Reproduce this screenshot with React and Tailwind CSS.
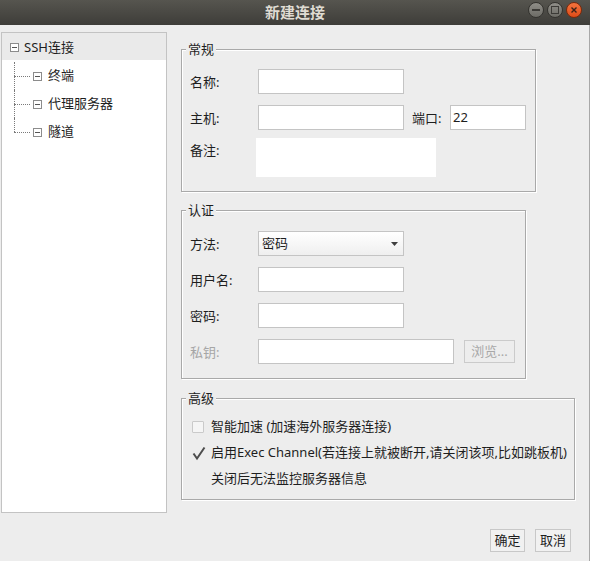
import React from 'react';

const font = { fontFamily: '"Noto Sans", "Noto Sans CJK SC", sans-serif' };

const Field = ({ w = 'w-[146px]', children }) => (
  <div className={`${w} h-[25px] border border-[#c4c4c4] bg-white flex items-center pl-[2px] text-[13px] text-[#1e1e1e]`}>
    {children}
  </div>
);

const Label = ({ children, w = 'w-[68px]', muted }) => (
  <span className={`${w} shrink-0 text-[13px] leading-[16px] ${muted ? 'text-[#a6a6a6]' : 'text-[#1e1e1e]'}`}>
    {children}
  </span>
);

const Group = ({ title, className, children }) => (
  <div className={`relative border border-[#a9a9a9] shadow-[inset_1px_1px_0_#ffffff,1px_1px_0_#ffffff] ${className}`}>
    <span className="absolute -top-[9px] left-[4px] bg-[#ededed] px-[2px] text-[13px] leading-[16px] text-[#1e1e1e]">
      {title}
    </span>
    {children}
  </div>
);

const MinusBox = () => (
  <span className="flex h-[9px] w-[9px] shrink-0 items-center justify-center border border-[#8c8c8c] bg-white">
    <span className="h-px w-[5px] bg-[#555]" />
  </span>
);

const TreeChild = ({ label, last }) => (
  <div className="flex h-[28px] items-center">
    <div className="relative ml-[12px] h-full w-[16px] shrink-0">
      <div className={`absolute left-0 top-0 border-l border-dotted border-[#7a7a7a] ${last ? 'h-1/2' : 'h-full'}`} />
      <div className="absolute left-0 top-1/2 w-full border-t border-dotted border-[#7a7a7a]" />
    </div>
    <span className="ml-[3px]">
      <MinusBox />
    </span>
    <span className="ml-[6px] text-[13px] text-[#1e1e1e]">{label}</span>
  </div>
);

const WinButton = ({ kind }) => {
  if (kind === 'close') {
    return (
      <span className="flex h-[16px] w-[16px] items-center justify-center rounded-full border border-[#7a2a0c] bg-gradient-to-b from-[#f4733d] to-[#de4c17]">
        <svg width="8" height="8" viewBox="0 0 8 8">
          <path d="M1.5 1.5 L6.5 6.5 M6.5 1.5 L1.5 6.5" stroke="#3a2218" strokeWidth="1.4" />
        </svg>
      </span>
    );
  }
  return (
    <span className="flex h-[16px] w-[16px] items-center justify-center rounded-full border border-[#34332f] bg-gradient-to-b from-[#8f8e88] to-[#6c6b65]">
      {kind === 'min' ? (
        <span className="h-[2px] w-[8px] bg-[#3c3b37]" />
      ) : (
        <span className="h-[8px] w-[8px] border-[1.5px] border-[#3c3b37]" />
      )}
    </span>
  );
};

export default function App() {
  return (
    <div style={font} className="h-[561px] w-[590px] overflow-hidden bg-[#ededed] select-none">
      {/* title bar */}
      <div className="relative flex h-[25px] items-center justify-center bg-gradient-to-b from-[#56554f] to-[#3e3d39]">
        <span className="text-[15px] font-bold text-[#dfdbd2]">新建连接</span>
        <div className="absolute right-[8px] top-[2px] flex gap-[3px]">
          <WinButton kind="min" />
          <WinButton kind="max" />
          <WinButton kind="close" />
        </div>
      </div>

      <div className="flex h-[536px] flex-col border-r border-[#a8a8a8]">
        <div className="flex items-start">
          {/* tree */}
          <div className="ml-px mt-[7px] h-[481px] w-[166px] border border-[#c3c3c3] bg-white">
            <div className="flex h-[27px] items-center bg-[#eaeaea] pl-[8px] pt-[2px]">
              <MinusBox />
              <span className="ml-[5px] text-[13px] text-[#1e1e1e]">SSH连接</span>
            </div>
            <div className="mt-[2px]">
              <TreeChild label="终端" />
              <TreeChild label="代理服务器" />
              <TreeChild label="隧道" last />
            </div>
          </div>

          {/* form */}
          <div className="ml-[14px] mt-[24px] flex flex-col">
            <Group title="常规" className="w-[355px] pb-[14px] pl-[8px] pt-[19px]">
              <div className="flex items-center">
                <Label>名称:</Label>
                <Field />
              </div>
              <div className="mt-[11px] flex items-center">
                <Label>主机:</Label>
                <Field />
                <span className="ml-[8px] w-[38px] text-[13px] leading-[16px] text-[#1e1e1e]">端口:</span>
                <Field w="w-[76px]">22</Field>
              </div>
              <div className="mt-[8px] flex items-start">
                <span className="w-[66px] shrink-0 pt-[4px] text-[13px] leading-[16px] text-[#1e1e1e]">备注:</span>
                <div className="h-[39px] w-[180px] bg-white" />
              </div>
            </Group>

            <Group title="认证" className="mt-[18px] w-[345px] pb-[14px] pl-[8px] pt-[20px]">
              <div className="flex items-center">
                <Label>方法:</Label>
                <div className="flex h-[25px] w-[146px] items-center justify-between border border-[#c4c4c4] bg-gradient-to-b from-white to-[#efefef] pl-[3px] pr-[5px] text-[13px] text-[#1e1e1e]">
                  <span>密码</span>
                  <svg width="7" height="4" viewBox="0 0 7 4">
                    <path d="M0 0 H7 L3.5 4 Z" fill="#3f3f3f" />
                  </svg>
                </div>
              </div>
              <div className="mt-[11px] flex items-center">
                <Label>用户名:</Label>
                <Field />
              </div>
              <div className="mt-[11px] flex items-center">
                <Label>密码:</Label>
                <Field />
              </div>
              <div className="mt-[11px] flex items-center">
                <Label muted>私钥:</Label>
                <Field w="w-[196px]" />
                <div className="ml-[10px] flex h-[23px] w-[51px] items-center justify-center border border-[#cbcbcb] text-[13px] text-[#a8a8a8]">
                  浏览...
                </div>
              </div>
            </Group>

            <Group title="高级" className="mt-[19px] w-[394px] pb-[7px] pl-[10px] pt-[15px]">
              <div className="flex h-[26px] items-center">
                <span className="h-[12px] w-[12px] shrink-0 rounded-[1px] border border-[#cacaca] bg-[#f5f5f5]" />
                <span className="ml-[7px] text-[13px] text-[#1e1e1e]">智能加速 (加速海外服务器连接)</span>
              </div>
              <div className="flex h-[26px] items-center">
                <svg width="14" height="15" viewBox="0 0 14 15" className="shrink-0">
                  <path d="M1.5 7.5 L5 12.5 L12.5 1.5" fill="none" stroke="#4d4d4d" strokeWidth="2" />
                </svg>
                <span className="ml-[5px] text-[13px] text-[#1e1e1e]">启用Exec Channel(若连接上就被断开,请关闭该项,比如跳板机)</span>
              </div>
              <div className="flex h-[26px] items-center pl-[19px] text-[13px] text-[#1e1e1e]">
                关闭后无法监控服务器信息
              </div>
            </Group>
          </div>
        </div>

        {/* buttons */}
        <div className="mt-[16px] flex justify-end gap-[10px] pr-[18px]">
          <button className="h-[23px] w-[35px] border border-[#c8c8c8] bg-[#f1f1f1] text-[13px] text-[#1e1e1e]">确定</button>
          <button className="h-[23px] w-[36px] border border-[#c8c8c8] bg-[#f1f1f1] text-[13px] text-[#1e1e1e]">取消</button>
        </div>
      </div>
    </div>
  );
}
